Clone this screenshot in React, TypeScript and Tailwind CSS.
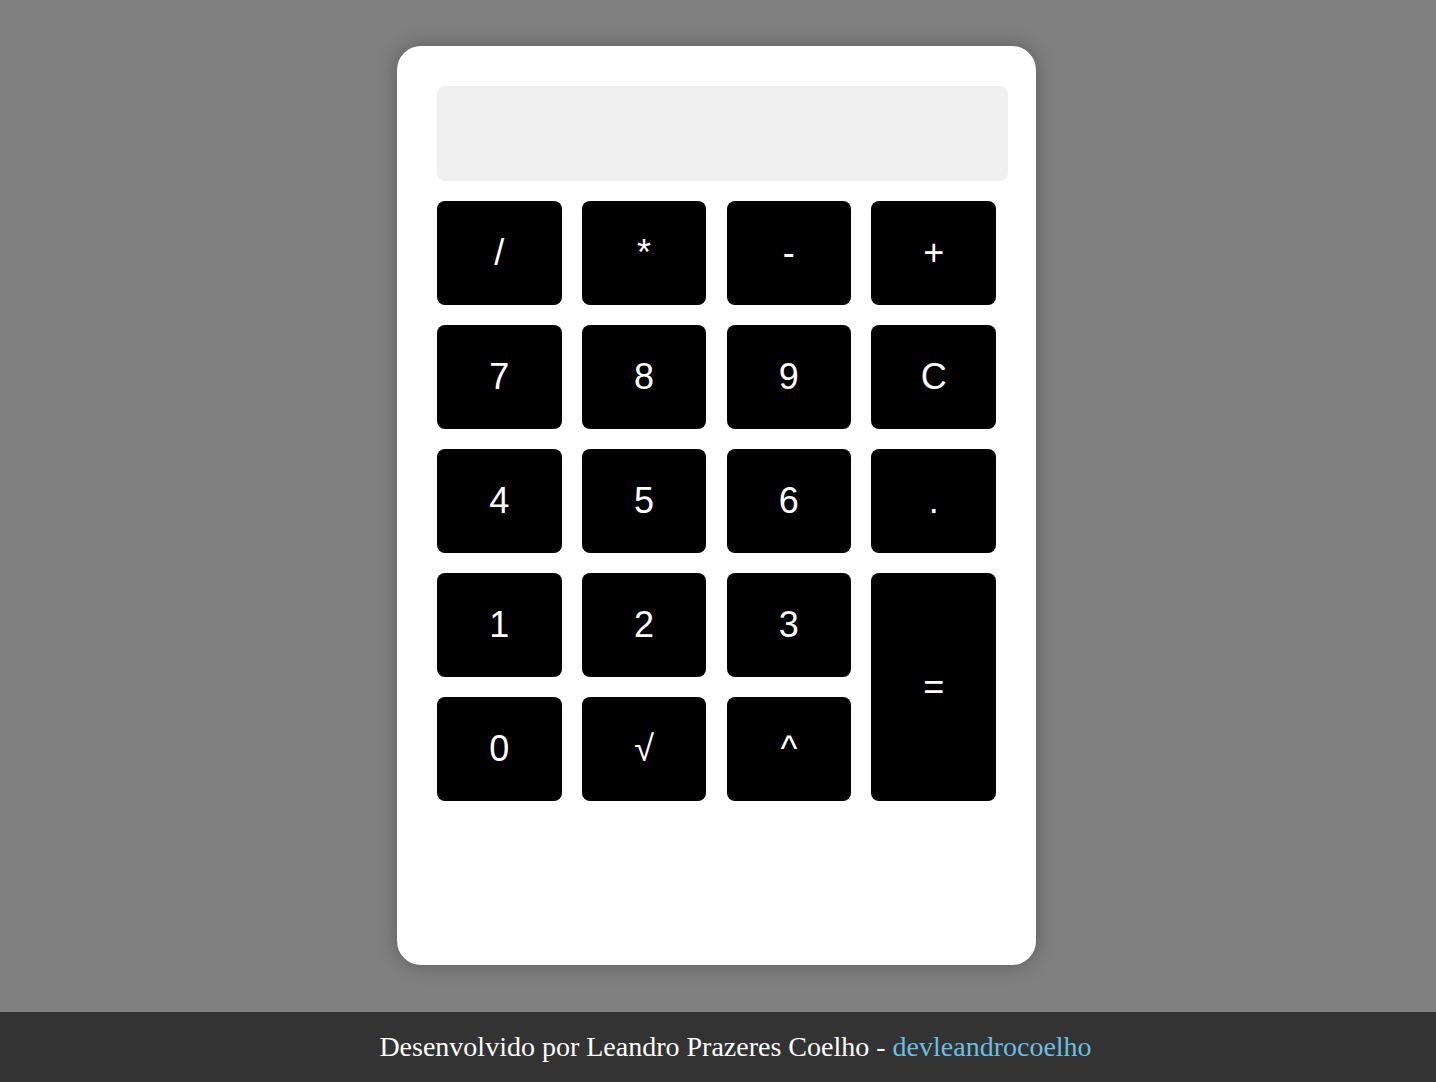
import React from "react";

const keys: { label: string; tall?: boolean }[] = [
  { label: "/" },
  { label: "*" },
  { label: "-" },
  { label: "+" },
  { label: "7" },
  { label: "8" },
  { label: "9" },
  { label: "C" },
  { label: "4" },
  { label: "5" },
  { label: "6" },
  { label: "." },
  { label: "1" },
  { label: "2" },
  { label: "3" },
  { label: "=", tall: true },
  { label: "0" },
  { label: "√" },
  { label: "^" },
];

export default function App() {
  return (
    <div className="min-h-[1082px] flex flex-col bg-[#808080]">
      <div className="h-[1012px] flex items-start justify-center pt-[46px] pr-[3px]">
        <div className="w-[639px] h-[919px] bg-white rounded-[24px] shadow-[0_0_20px_rgba(0,0,0,0.3)] pt-[40px] pl-[40px]">
          <div className="w-[571px] h-[95px] bg-[#f0f0f0] rounded-[8px]" />
          <div className="mt-[20px] grid grid-cols-[124.6px_124.6px_124.6px_124.6px] auto-rows-[104px] gap-x-[20.2px] gap-y-[20px]">
            {keys.map((k) => (
              <button
                key={k.label}
                className={
                  "bg-black text-white rounded-[8px] flex items-center justify-center text-[36px] font-['Liberation_Sans',Arial,sans-serif] " +
                  (k.tall ? "row-span-2" : "")
                }
              >
                {k.label}
              </button>
            ))}
          </div>
        </div>
      </div>
      <footer className="h-[70px] bg-[#333333] flex items-center justify-center pl-[35px] text-white text-[28px] font-['Liberation_Serif','Times_New_Roman',serif]">
        <span>
          Desenvolvido por Leandro Prazeres Coelho -{" "}
          <a className="text-[#6bbfe0]">devleandrocoelho</a>
        </span>
      </footer>
    </div>
  );
}
